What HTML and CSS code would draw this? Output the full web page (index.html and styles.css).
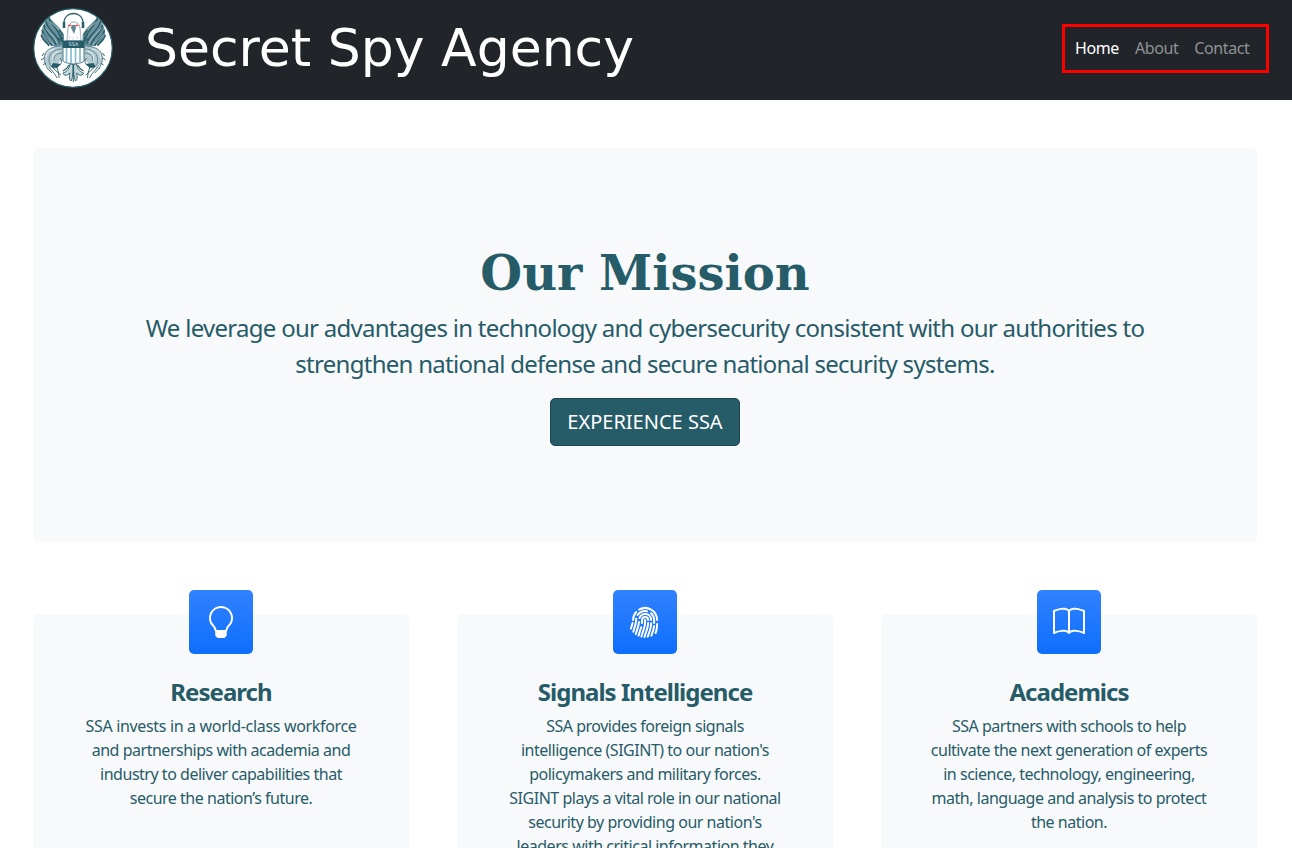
FILE: index.html
```html
<!doctype html>
<html lang="en">
  <head>
    <meta charset="utf-8" />
    <meta name="viewport" content="width=device-width, initial-scale=1" />
    <title>Secret Spy Agency</title>
    <link rel="stylesheet" href="styles.css">
  </head>
  <body>
    <header class="header">
      <a class="brand" href="#">
        <svg class="logo" width="80" height="80" viewBox="0 0 80 80" fill="none" stroke="#265b68">
          <defs>
            <g id="side">
              <!-- wing -->
              <path d="M16 9c-6 6-9 15-7 21 2 7 9 7 14 9l8-2V27c-3-7-9-11-15-18z" fill="#6b929c" stroke="none" />
              <path d="M16 9c1 8 10 11 13 24M13 13c1 9 11 12 14 23M11 17c1 9 9 11 12 20M9 22c2 8 8 9 10 16M8 27c2 6 6 7 8 11" stroke-width="1.4" />
              <path d="M17 14c5 4 9 6 11 12M12 20c6 6 10 10 12 15M10 26c4 5 8 8 11 11" stroke="#cfdee1" stroke-width=".6" />
              <path d="M26 22l4 5M26 26l4 5M25 30l5 4" stroke-width="1.5" />
              <!-- leg and branch -->
              <path d="M30 38c-9 0-16 3-18 8-2 6 0 11 4 14l8-2 3-5h3z" fill="#b4cad0" stroke="none" />
              <path d="M30 38c-8 0-14 2-17 6-3 5-2 12 2 17M29 41c-8 0-13 4-13 11 0 5 3 8 7 8M29 45c-6 0-9 4-8 8" stroke="#5c8792" stroke-width="1" />
              <path d="M22 41c-6 1-9 4-9 9M26 43c-5 2-7 5-6 10" stroke="#fff" stroke-width=".7" />
              <path d="M27 50c3 3 2 7-4 8M11 45l-2 3M11 50l-3 2M13 55l-3 2M16 59c2 3 5 5 8 11M19 59c3 3 5 5 9 8M14 60l5 5M23 58c2 4 3 8 3 12" stroke="#3d6e7a" stroke-width="1" />
              <path d="M20 55l8 1-4 4-6-1z" fill="#265b68" stroke="none" />
              <!-- tail feathers -->
              <path d="M37 56c-1 6-4 8-7 9 1 3 4 3 7 0-1 4-1 6 1 8 2-4 2-9 2-17z" fill="#c6d7db" stroke-width=".9" />
              <path d="M36 57c-2 4-4 5-6 6" stroke-width="1.1" />
            </g>
          </defs>
          <circle cx="40" cy="40" r="39.3" fill="#fff" stroke-width="1.2" />
          <use href="#side" />
          <use href="#side" transform="translate(80.6) scale(-1 1)" />
          <path d="M34 33l1-13c1-8 11-8 12 0l1 13z" fill="#fff" stroke-width=".5" />
          <path d="M35 25l-1 7M37 28l-.5 3M40 29v3M44 28l.5 3M47 25l1 7" stroke="#c3d3d7" stroke-width=".7" />
          <path d="M39 17h3l1 3-2 6-1.500-3-1.500-3z" fill="#5f858f" stroke="none" />
          <path d="M31 16C30 2 51 2 50 16" stroke-width="1.300" />
          <path d="M31 14v6M50 14v6" stroke-width="2.500" />
          <path d="M35.400 17.500h3M42.400 17.500h3" stroke="#ef4450" stroke-width="1.600" />
          <path d="M30 39h21v13c0 3-5 3-10.500 4-5.500-1-10.500-1-10.500-4z" fill="#fff" stroke-width=".8" />
          <path d="M33.500 40v14M38 40v15M42.500 40v15M47 40v14" stroke="#8fc0d0" stroke-width="1.800" />
          <path d="M29.500 32.500h22V40h-22z" fill="#265b68" stroke="none" />
          <text class="logo-text" x="40.500" y="38">SSA</text>
          <path d="M40.300 57v17" stroke-width="1" />
        </svg>
        <span class="brand-name">Secret Spy Agency</span>
      </a>
      <nav class="nav">
        <a class="nav-link active" href="#">Home</a>
        <a class="nav-link" href="#">About</a>
        <a class="nav-link" href="#">Contact</a>
      </nav>
    </header>

    <main class="container">
      <section class="mission">
        <h1>Our Mission</h1>
        <p class="lead">
          We leverage our advantages in technology and cybersecurity consistent with our authorities to<br />
          strengthen national defense and secure national security systems.
        </p>
        <a class="btn" href="#">EXPERIENCE SSA</a>
      </section>

      <section class="cards">
        <article class="card">
          <div class="feature">
            <svg width="32" height="32" viewBox="0 0 16 16" fill="currentColor">
              <path d="M2 6a6 6 0 1 1 10.174 4.310c-.203.196-.359.400-.453.619l-.762 1.769A.5.5 0 0 1 10.500 13a.5.5 0 0 1 0 1 .5.5 0 0 1 0 1l-.224.447a1 1 0 0 1-.894.553H6.618a1 1 0 0 1-.894-.553L5.500 15a.5.5 0 0 1 0-1 .5.5 0 0 1 0-1 .5.5 0 0 1-.460-.302l-.761-1.770a1.964 1.964 0 0 0-.453-.618A5.984 5.984 0 0 1 2 6zm6-5a5 5 0 0 0-3.479 8.592c.263.254.514.564.676.941L5.830 12h4.342l.632-1.467c.162-.377.413-.687.676-.941A5 5 0 0 0 8 1z" />
            </svg>
          </div>
          <h2>Research</h2>
          <p>
            <span class="wide">SSA invests in a world-class workforce</span><br />
            and partnerships with academia and<br />
            industry to deliver capabilities that<br />
            secure the nation’s future.
          </p>
        </article>

        <article class="card">
          <div class="feature">
            <svg width="32" height="32" viewBox="0 0 16 16" fill="currentColor">
              <path d="M8.060 6.500a.5.5 0 0 1 .5.5v.776a11.500 11.500 0 0 1-.552 3.519l-1.331 4.140a.5.5 0 0 1-.952-.305l1.330-4.141a10.500 10.500 0 0 0 .504-3.213V7a.5.5 0 0 1 .5-.5Z" />
              <path d="M6.060 7a2 2 0 1 1 4 0 .5.5 0 1 1-1 0 1 1 0 1 0-2 0v.332c0 .409-.022.816-.066 1.221A.5.5 0 0 1 6 8.447c.040-.370.060-.742.060-1.115V7Zm3.509 1a.5.5 0 0 1 .487.513 11.500 11.500 0 0 1-.587 3.339l-1.266 3.800a.5.5 0 0 1-.949-.317l1.267-3.800a10.500 10.500 0 0 0 .535-3.048A.5.5 0 0 1 9.569 8Zm-3.356 2.115a.5.5 0 0 1 .330.626L5.240 14.939a.5.5 0 1 1-.955-.296l1.303-4.199a.5.5 0 0 1 .625-.329Z" />
              <path d="M4.759 5.833A3.501 3.501 0 0 1 11.559 7a.5.5 0 0 1-1 0 2.500 2.500 0 0 0-4.857-.833.5.5 0 1 1-.943-.334Zm.3 1.670a.5.5 0 0 1 .449.546 10.720 10.720 0 0 1-.4 2.031l-1.222 4.072a.5.5 0 1 1-.958-.287L4.150 9.793a9.720 9.720 0 0 0 .363-1.842.5.5 0 0 1 .546-.449Zm6 .647a.5.5 0 0 1 .5.5c0 1.280-.213 2.552-.632 3.762l-1.090 3.145a.5.5 0 0 1-.944-.327l1.089-3.145c.382-1.105.578-2.266.578-3.435a.5.5 0 0 1 .5-.5Z" />
              <path d="M3.902 4.222a5 5 0 0 1 5.202-2.113.5.5 0 0 1-.208.979 4 4 0 0 0-4.163 1.690.5.5 0 0 1-.831-.556Zm6.720-.955a.5.5 0 0 1 .705-.052A4.990 4.990 0 0 1 13.059 7v1.500a.5.5 0 1 1-1 0V7a3.990 3.990 0 0 0-1.386-3.028.5.5 0 0 1-.051-.705ZM3.680 5.842a.5.5 0 0 1 .422.568c-.029.192-.044.390-.044.590 0 .710-.1 1.417-.298 2.100l-1.140 3.923a.5.5 0 1 1-.960-.279L2.800 8.821A6.531 6.531 0 0 0 3.058 7c0-.250.019-.496.054-.736a.5.5 0 0 1 .568-.422Zm8.882 3.660a.5.5 0 0 1 .456.540c-.084 1-.298 1.986-.640 2.934l-.744 2.068a.5.5 0 0 1-.941-.338l.745-2.070a10.510 10.510 0 0 0 .584-2.678.5.5 0 0 1 .540-.456Z" />
              <path d="M4.810 1.370A6.500 6.500 0 0 1 14.560 7a.5.5 0 1 1-1 0 5.500 5.500 0 0 0-8.250-4.765.5.5 0 0 1-.5-.865Zm-.890 1.257a.5.5 0 0 1 .040.706A5.478 5.478 0 0 0 2.560 7a.5.5 0 0 1-1 0c0-1.664.626-3.184 1.655-4.333a.5.5 0 0 1 .706-.040ZM1.915 8.020a.5.5 0 0 1 .346.616l-.779 2.767a.5.5 0 1 1-.962-.270l.778-2.767a.5.5 0 0 1 .617-.346Zm12.150.481a.5.5 0 0 1 .490.510c-.030 1.499-.161 3.025-.727 4.533l-.070.187a.5.5 0 0 1-.936-.351l.070-.187c.506-1.350.634-2.740.663-4.202a.5.5 0 0 1 .510-.490Z" />
            </svg>
          </div>
          <h2>Signals Intelligence</h2>
          <p>
            SSA provides foreign signals<br />
            intelligence (SIGINT) to our nation's<br />
            policymakers and military forces.<br />
            SIGINT plays a vital role in our national<br />
            security by providing our nation's<br />
            leaders with critical information they
          </p>
        </article>

        <article class="card">
          <div class="feature">
            <svg width="32" height="32" viewBox="0 0 16 16" fill="currentColor">
              <path d="M1 2.828c.885-.370 2.154-.769 3.388-.893 1.330-.134 2.458.063 3.112.752v9.746c-.935-.530-2.120-.603-3.213-.493-1.180.120-2.370.461-3.287.811V2.828zm7.500-.141c.654-.689 1.782-.886 3.112-.752 1.234.124 2.503.523 3.388.893v9.923c-.918-.350-2.107-.692-3.287-.810-1.094-.111-2.278-.039-3.213.492V2.687zM8 1.783C7.015.936 5.587.810 4.287.940c-1.514.153-3.042.672-3.994 1.105A.5.5 0 0 0 0 2.500v11a.5.5 0 0 0 .707.455c.882-.400 2.303-.881 3.680-1.020 1.409-.142 2.590.087 3.223.877a.5.5 0 0 0 .780 0c.633-.790 1.814-1.019 3.222-.877 1.378.139 2.800.620 3.681 1.020A.5.5 0 0 0 16 13.500v-11a.5.5 0 0 0-.293-.455c-.952-.433-2.480-.952-3.994-1.105C10.413.809 8.985.936 8 1.783z" />
            </svg>
          </div>
          <h2>Academics</h2>
          <p>
            SSA partners with schools to help<br />
            cultivate the next generation of experts<br />
            in science, technology, engineering,<br />
            math, language and analysis to protect<br />
            the nation.
          </p>
        </article>
      </section>
    </main>
  </body>
</html>
```
FILE: styles.css
```css
:root {
  --dark: #212529;
  --light: #f8f9fb;
  --teal: #265b68;
}

* {
  box-sizing: border-box;
}

body {
  margin: 0;
  height: 848px;
  overflow: hidden;
  background: #fff;
  color: var(--teal);
  font-family: 'Noto Sans', sans-serif;
  font-size: 16px;
  line-height: 24px;
}

a {
  text-decoration: none;
}

.header {
  display: flex;
  align-items: center;
  justify-content: space-between;
  height: 100px;
  padding: 0 23.5px 4px 33px;
  background: var(--dark);
}

.brand {
  display: flex;
  align-items: center;
  gap: 32px;
  color: #fff;
}

.logo-text {
  fill: #dce8eb;
  stroke: none;
  font: 5px 'DejaVu Sans', sans-serif;
  text-anchor: middle;
}

.brand-name {
  font-family: 'DejaVu Sans', sans-serif;
  font-size: 52px;
  line-height: 78px;
}

.nav {
  display: flex;
  gap: 16px;
  align-items: center;
  width: 207px;
  height: 49px;
  padding-left: 10.5px;
  border: 3px solid #f00;
  letter-spacing: -0.4px;
}

.nav-link {
  color: #909294;
}

.nav-link.active {
  color: #fff;
}

.container {
  padding: 48px 35px 0 33px;
}

.mission {
  height: 394px;
  padding-top: 96px;
  border-radius: 5px;
  background: var(--light);
  text-align: center;
}

h1 {
  margin: 0 0 8px;
  font-family: 'DejaVu Serif', serif;
  font-size: 48px;
  font-weight: 700;
  line-height: 58px;
}

.lead {
  margin: 0 0 16px;
  font-size: 24px;
  line-height: 36px;
  letter-spacing: -0.72px;
  white-space: nowrap;
}

.btn {
  display: flex;
  align-items: center;
  justify-content: center;
  width: 190px;
  height: 48px;
  margin: 0 auto;
  border: 1px solid #1d4651;
  border-radius: 5px;
  background: var(--teal);
  color: #fff;
  font-size: 20px;
  white-space: nowrap;
}

.cards {
  display: grid;
  grid-template-columns: repeat(3, 1fr);
  gap: 48px;
  padding-top: 72px;
}

.card {
  min-width: 0;
  height: 300px;
  border-radius: 5px;
  background: var(--light);
  text-align: center;
}

.card p {
  margin: 0;
  letter-spacing: -0.48px;
  white-space: nowrap;
}

.card .wide {
  letter-spacing: -0.33px;
}

.feature {
  display: flex;
  align-items: center;
  justify-content: center;
  width: 64px;
  height: 64px;
  margin: -24px auto 24px;
  border-radius: 5px;
  background: linear-gradient(#3182fd, #0d6efd);
  color: #fff;
}

h2 {
  margin: 0 0 8px;
  font-size: 24px;
  font-weight: 700;
  line-height: 28px;
  letter-spacing: -0.97px;
}
```
